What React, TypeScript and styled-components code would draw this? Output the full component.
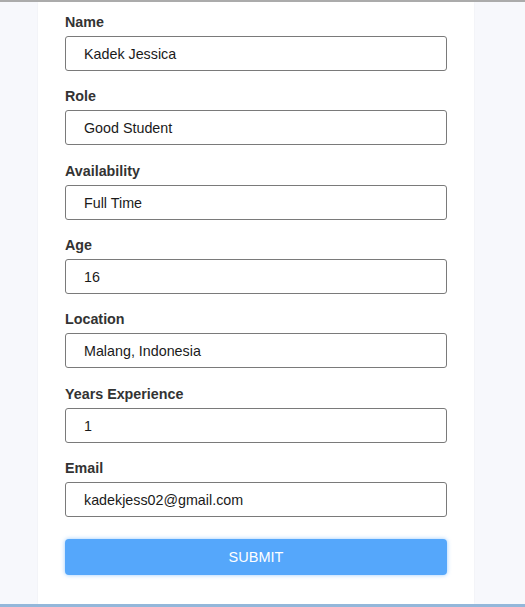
import React from "react";
import styled, { createGlobalStyle } from "styled-components";

const Global = createGlobalStyle`
  html, body { margin: 0; padding: 0; height: 100%; }
  body { background: #f7f8fc; font-family: "Liberation Sans", Arial, sans-serif; }
  #root { height: 100%; }
`;

const Page = styled.div`
  height: 607px;
  box-sizing: border-box;
  display: flex;
  flex-direction: column;
  border-top: 2px solid #ababab;
  border-bottom: 3px solid #93b7da;
  overflow: hidden;
`;

const Card = styled.form`
  flex: 1;
  width: 436px;
  margin-left: 38px;
  box-sizing: border-box;
  background: #ffffff;
  padding: 12px 27px 0;
  box-shadow: 0 0 2px rgba(0, 0, 0, 0.05);
  display: flex;
  flex-direction: column;
`;

const Field = styled.div`
  display: flex;
  flex-direction: column;
  margin-bottom: 17.33px;
`;

const Label = styled.label`
  font-size: 14.3px;
  font-weight: bold;
  line-height: 17px;
  color: #333333;
  margin-bottom: 5px;
`;

const Input = styled.input`
  height: 35px;
  box-sizing: border-box;
  border: 1px solid #7a7a7a;
  border-radius: 3px;
  padding: 1px 18px 0;
  font-family: "Liberation Sans", Arial, sans-serif;
  font-size: 14.3px;
  color: #1a1a1a;
  background: #fff;
  outline: none;
`;

const Submit = styled.button`
  margin-top: 5px;
  height: 36px;
  border: none;
  border-radius: 4px;
  background: #55a7fb;
  color: #ffffff;
  font-family: "Liberation Sans", Arial, sans-serif;
  font-size: 14.5px;
  box-shadow: 0 0 4px rgba(85, 167, 251, 0.6);
  cursor: pointer;
`;

const fields = [
  ["Name", "Kadek Jessica"],
  ["Role", "Good Student"],
  ["Availability", "Full Time"],
  ["Age", "16"],
  ["Location", "Malang, Indonesia"],
  ["Years Experience", "1"],
  ["Email", "kadekjess02@gmail.com"],
];

export default function App() {
  return (
    <>
      <Global />
      <Page>
        <Card onSubmit={(e) => e.preventDefault()}>
          {fields.map(([label, value]) => (
            <Field key={label}>
              <Label>{label}</Label>
              <Input defaultValue={value} />
            </Field>
          ))}
          <Submit type="submit">SUBMIT</Submit>
        </Card>
      </Page>
    </>
  );
}
